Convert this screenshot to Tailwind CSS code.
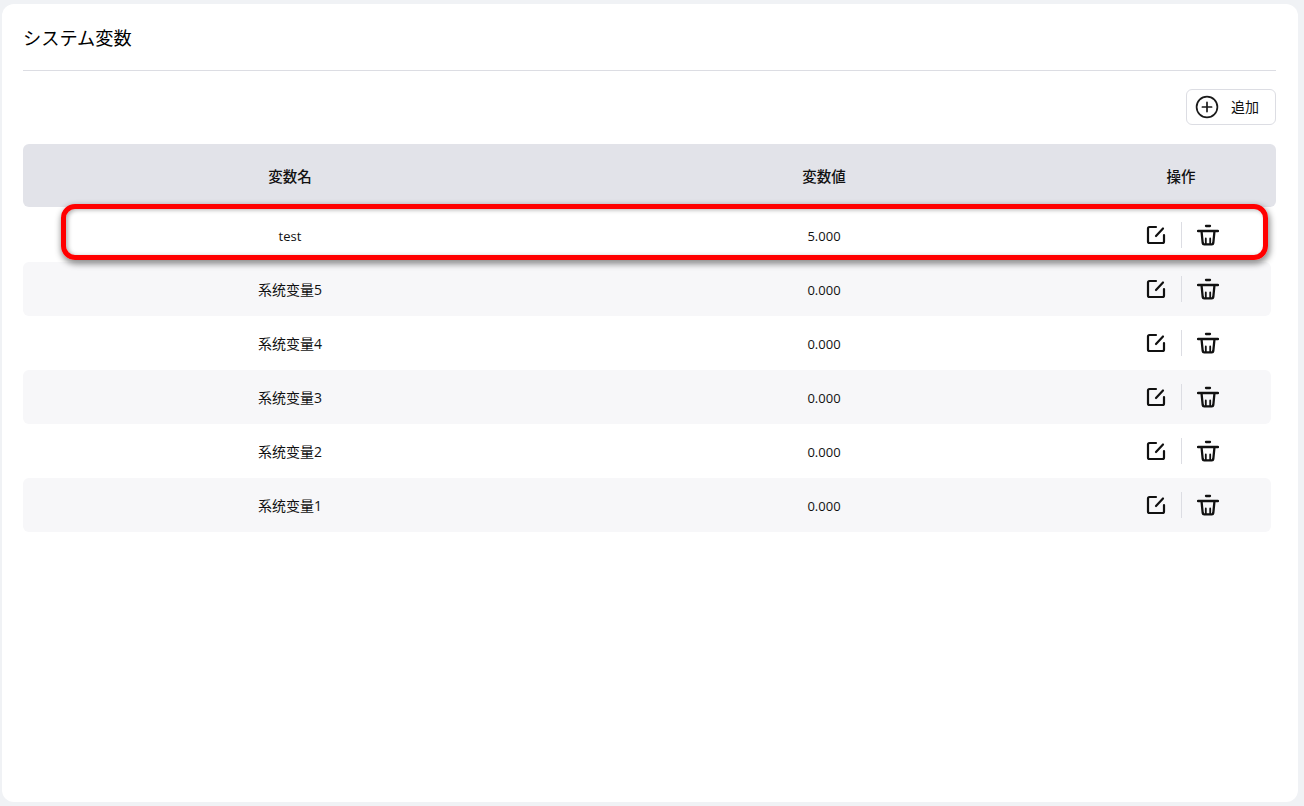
<!DOCTYPE html>
<html lang="ja">
<head>
    <meta charset="UTF-8">
    <meta name="viewport" content="width=device-width, initial-scale=1.0">
    <title>システム変数</title>
    <script src="https://cdn.jsdelivr.net/npm/@tailwindcss/browser@4"></script>
</head>
<body class="bg-[#f0f2f5] h-[806px] overflow-hidden pt-1 pb-1 pl-[2px] pr-[6px] font-['Open_Sans','Noto_Sans_CJK_SC',sans-serif] text-[#111]">
    <div class="relative bg-white rounded-xl h-[798px] pt-[20px] pl-[21px] pr-[22px]">
        <!-- Title -->
        <div class="h-[47px] border-b border-[#dcdde3]">
            <h1 class="text-[18.2px] leading-[26px] font-['Noto_Sans_CJK_JP',sans-serif] font-normal text-black">システム変数</h1>
        </div>

        <!-- Toolbar -->
        <div class="flex justify-end mt-[18px] h-[37px]">
            <button class="flex items-center w-[90px] h-[36px] pl-[9px] border border-[#dcdde3] rounded-md bg-white text-[14px]">
                <svg class="w-[24px] h-[24px] -ml-px" viewBox="0 0 24 24" fill="none" stroke="#1a1a1a" stroke-width="1.7" stroke-linecap="round">
                    <circle cx="12" cy="12" r="10.400"/>
                    <path d="M12 7.400v9.200M7.400 12h9.200"/>
                </svg>
                <span class="ml-[12px] -mt-[2px]">追加</span>
            </button>
        </div>

        <!-- Table header -->
        <div class="grid grid-cols-[534px_534px_180px] pr-[5px] pt-[2px] h-[63px] mt-[18px] items-center text-center text-[14.5px] font-medium bg-[#e2e3e9] rounded-md">
            <div>変数名</div>
            <div>変数値</div>
            <div>操作</div>
        </div>

        <!-- Rows -->
        <div id="rows" class="w-[1248px] mt-px"></div>

        <!-- Red annotation drawn over the first row -->
        <div class="absolute left-[59px] top-[200px] w-[1207px] h-[56px] border-[5px] border-[#ff0000] rounded-[14px] shadow-[1px_3px_6px_1px_rgba(0,0,0,0.45),inset_2px_1px_4px_rgba(0,0,0,0.3)] pointer-events-none"></div>
    </div>

    <script>
        const variaveis = [
            { nome: 'test', valor: '5.000' },
            { nome: '系统变量5', valor: '0.000' },
            { nome: '系统变量4', valor: '0.000' },
            { nome: '系统变量3', valor: '0.000' },
            { nome: '系统变量2', valor: '0.000' },
            { nome: '系统变量1', valor: '0.000' }
        ];

        const rows = document.getElementById('rows');
        variaveis.forEach((v, i) => {
            const tr = document.createElement('div');
            tr.className = 'grid grid-cols-[534px_534px_180px] h-[54px] items-center text-center rounded-md ' + (i % 2 ? 'bg-[#f7f7f9]' : '');
            tr.innerHTML = `
                <div class="${i === 0 ? 'pt-[3px] text-[13px]' : 'text-[14px]'}">${v.nome}</div>
                <div class="pt-[3px] text-[13px]">${v.valor}</div>
                <div class="flex items-center justify-center pl-[2px]">
                    <svg class="w-[20px] h-[20px]" viewBox="0 0 20 20" fill="none" stroke="#111" stroke-width="2.200" stroke-linecap="round" stroke-linejoin="round"><path d="M10 2H3.500A1.500 1.500 0 0 0 2 3.500v13A1.500 1.500 0 0 0 3.500 18h13a1.500 1.500 0 0 0 1.500-1.500V10"/><path d="M10 11 17 3.500"/></svg>
                    <div class="w-px h-[26px] bg-[#dcdde3] mx-[15px]"></div>
                    <svg class="w-[22px] h-[22px] -mt-px" viewBox="0 0 22 22" fill="none" stroke="#111" stroke-width="2.300" stroke-linecap="round" stroke-linejoin="round"><path d="M1 7h20M9 2h4M4.500 7l1.200 12a1.500 1.500 0 0 0 1.500 1.300h7.600a1.500 1.500 0 0 0 1.500-1.300L17.500 7"/><path stroke-width="1.800" d="M8.800 14.500v5.500M13.200 14.500v5.500"/></svg>
                </div>
            `;
            rows.appendChild(tr);
        });
    </script>
</body>
</html>
